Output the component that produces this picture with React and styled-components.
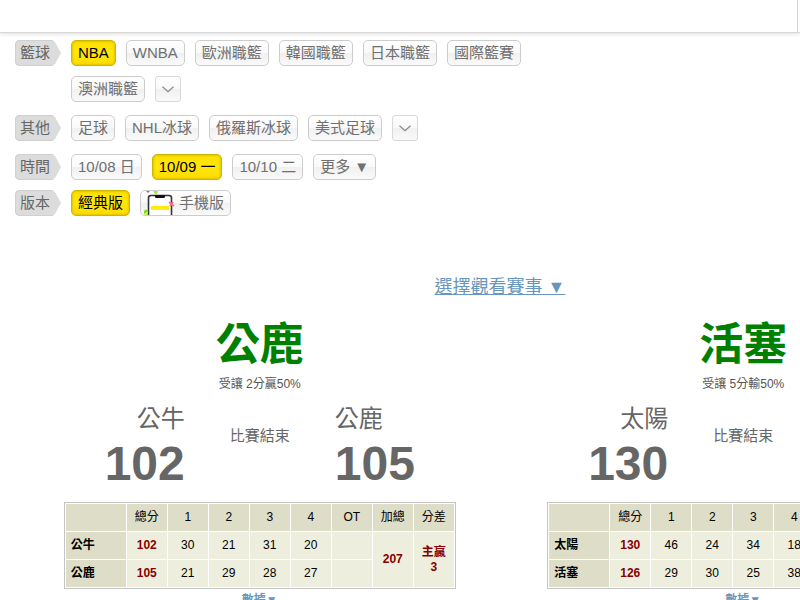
import React from "react";
import styled, { createGlobalStyle, css } from "styled-components";

const GlobalStyle = createGlobalStyle`
  *, *::before, *::after { box-sizing: border-box; }
  body {
    margin: 0;
    background: #fff;
    color: #000;
    font-family: "Liberation Sans", "Noto Sans CJK TC", sans-serif;
  }
`;

const Page = styled.div`
  min-height: 100vh;
  max-height: 100vh;
  overflow: hidden;
`;

const Header = styled.header`
  display: flex;
  justify-content: flex-end;
  height: 33px;
  border-bottom: 1px solid #d8d8d8;
  box-shadow: 0 1px 4px #ddd;
`;

const HeaderEnd = styled.div`
  width: 3px;
  border-left: 1px solid #d4d4d4;
`;

const Filters = styled.nav`
  display: flex;
  flex-direction: column;
  padding: 7px 15px 0;
`;

const FilterRow = styled.div`
  display: flex;
  align-items: flex-start;
  gap: 10px;
  margin-bottom: ${(p) => (p.$tight ? 10 : 13)}px;
`;

const FilterLabel = styled.span`
  flex: none;
  width: 46px;
  height: 26px;
  padding-left: 5px;
  border-radius: 5px 0 0 5px;
  clip-path: polygon(0 0, 37px 0, 40px 2px, 46px 50%, 40px 24px, 37px 100%, 0 100%);
  background: #dcdcdc;
  box-shadow: inset 1px 0 #d0d0d0, inset 0 1px #d0d0d0, inset 0 -1px #d0d0d0;
  color: #666;
  font-size: 15px;
  line-height: 26px;
`;

const Options = styled.div`
  display: flex;
  flex-wrap: wrap;
  gap: 10px;
  max-width: 520px;
`;

const pill = css`
  display: flex;
  align-items: center;
  justify-content: center;
  height: 26px;
  border: 1px solid #ccc;
  border-radius: 5px;
  padding: 0 6px;
  background: linear-gradient(#fff, #f9f9f9 50%, #f0f0f0 51%, #fafafa);
  color: #707070;
  font-family: inherit;
  font-size: 15px;
  line-height: 24px;
  white-space: nowrap;
  text-decoration: none;
  cursor: pointer;
`;

const Option = styled.a`
  ${pill}
  ${(p) =>
    p.$active &&
    css`
      border-color: #cdb600;
      background: linear-gradient(#ffe100, #ffe60a 50%, #ffdc00);
      box-shadow: inset 0 0 2px 1px #dfc600;
      color: #000;
    `}
`;

const PhoneOption = styled(Option)`
  padding: 0 6px 0 3px;
  gap: 3px;
  overflow: hidden;
`;

const MenuButton = styled.button`
  ${pill}
`;

const ExpandButton = styled.button`
  ${pill}
  width: 26px;
  padding: 0;
  border-color: #d8d8d8;
  border-radius: 3px;
`;

const Board = styled.main`
  min-width: 1000px;
  padding: 47px 15px 0 18px;
`;

const Chooser = styled.div`
  display: flex;
  justify-content: center;
  padding-right: 3px;
`;

const ChooserLink = styled.a`
  color: #6797bd;
  font-size: 18px;
  line-height: 28px;
`;

const Games = styled.div`
  display: grid;
  grid-template-columns: 1fr 1fr;
  padding-top: 14px;
`;

const Game = styled.article`
  display: flex;
  flex-direction: column;
  align-items: center;
`;

const Pick = styled.h2`
  margin: 0;
  color: #008000;
  font-size: 44px;
  line-height: 60px;
`;

const Odds = styled.p`
  margin: 0;
  color: #555;
  font-size: 12px;
  line-height: 18px;
`;

const Scoreboard = styled.div`
  display: grid;
  grid-template-columns: 1fr 150px 1fr;
  align-items: center;
  width: 100%;
  padding: 11px 0 8px;
  color: #666;
`;

const Side = styled.div`
  text-align: ${(p) => (p.$home ? "left" : "right")};
`;

const TeamName = styled.div`
  font-size: 24px;
  line-height: 30px;
`;

const Score = styled.div`
  font-size: 48px;
  font-weight: bold;
  line-height: 60px;
`;

const Status = styled.div`
  padding-bottom: 26px;
  font-size: 15px;
  line-height: 22px;
  text-align: center;
`;

const Table = styled.table`
  width: 392px;
  table-layout: fixed;
  border: 1px solid #c4c4c4;
  border-spacing: 1px;
  font-size: 12px;
  line-height: 15px;
  text-align: center;
`;

const TeamCol = styled.col`
  width: 60px;
`;

const Head = styled.th`
  height: 27px;
  padding: 0;
  background: #ddddc8;
  font-weight: normal;
`;

const RowHead = styled(Head)`
  padding-left: 5px;
  font-weight: bold;
  text-align: left;
`;

const Cell = styled.td`
  height: 27px;
  padding: 0 5px;
  background: #eeeede;
  ${(p) =>
    p.$strong &&
    css`
      color: #880000;
      font-weight: bold;
    `}
`;

const DataLink = styled.a`
  margin-top: 2px;
  color: #6797bd;
  font-size: 12px;
  font-weight: bold;
  line-height: 18px;
  text-decoration: none;
`;

function Chevron() {
  return (
    <svg width="12" height="7" viewBox="0 0 12 7" fill="none" aria-hidden="true">
      <path d="M.5 .7 6 5.8 11.5 .7" stroke="#888" strokeWidth="1.2" />
    </svg>
  );
}

function PhoneIcon() {
  return (
    <svg width="32" height="24" viewBox="0 0 32 24" aria-hidden="true">
      <path d="M4.5 25V7Q4.5 4.5 7 4.5H25Q27.5 4.5 27.5 7V25" fill="#fff" stroke="#333" strokeWidth="1.6" />
      <path d="M10.5 4H21.5L20.5 7H11.5Z" fill="#111" />
      <path d="M7 15H25V19H7Z" fill="#ffeb0a" />
      <path d="M0 18 3 20V24H0Z" fill="#c8f35a" />
      <path d="M0 22 3 19" stroke="#70d930" strokeWidth="2" />
      <path d="M9 0H14L13 3H11Z" fill="#a4e653" />
      <path d="M2 0H6L4 2Z" fill="#e7506b" />
      <path d="M25 11 30 15M29 11 26 15" stroke="#ef718c" strokeWidth="2" />
    </svg>
  );
}

const basketball = ["NBA", "WNBA", "歐洲職籃", "韓國職籃", "日本職籃", "國際籃賽", "澳洲職籃"];
const others = ["足球", "NHL冰球", "俄羅斯冰球", "美式足球"];
const dates = ["10/08 日", "10/09 一", "10/10 二"];
const columns = ["", "總分", "1", "2", "3", "4", "OT", "加總", "分差"];

const games = [
  {
    pick: "公鹿",
    odds: "受讓 2分贏50%",
    sum: 207,
    margin: ["主贏", 3],
    away: { name: "公牛", total: 102, periods: [30, 21, 31, 20, ""] },
    home: { name: "公鹿", total: 105, periods: [21, 29, 28, 27, ""] },
  },
  {
    pick: "活塞",
    odds: "受讓 5分輸50%",
    sum: 256,
    margin: ["客贏", 4],
    away: { name: "太陽", total: 130, periods: [46, 24, 34, 18, 8] },
    home: { name: "活塞", total: 126, periods: [29, 30, 25, 38, 4] },
  },
];

function OptionList({ items, active }) {
  return items.map((item) => (
    <Option key={item} href="#" $active={item === active}>
      {item}
    </Option>
  ));
}

function TeamRow({ team, children }) {
  return (
    <tr>
      <RowHead scope="row">{team.name}</RowHead>
      <Cell $strong>{team.total}</Cell>
      {team.periods.map((points, i) => (
        <Cell key={i}>{points}</Cell>
      ))}
      {children}
    </tr>
  );
}

function GameCard({ game }) {
  return (
    <Game>
      <Pick>{game.pick}</Pick>
      <Odds>{game.odds}</Odds>
      <Scoreboard>
        <Side>
          <TeamName>{game.away.name}</TeamName>
          <Score>{game.away.total}</Score>
        </Side>
        <Status>比賽結束</Status>
        <Side $home>
          <TeamName>{game.home.name}</TeamName>
          <Score>{game.home.total}</Score>
        </Side>
      </Scoreboard>
      <Table>
        <colgroup>
          <TeamCol />
          <col span="8" />
        </colgroup>
        <thead>
          <tr>
            {columns.map((c) => (
              <Head key={c} scope="col">{c}</Head>
            ))}
          </tr>
        </thead>
        <tbody>
          <TeamRow team={game.away}>
            <Cell rowSpan={2} $strong>{game.sum}</Cell>
            <Cell rowSpan={2} $strong>
              {game.margin[0]}
              <br />
              {game.margin[1]}
            </Cell>
          </TeamRow>
          <TeamRow team={game.home} />
        </tbody>
      </Table>
      <DataLink href="#">數據▼</DataLink>
    </Game>
  );
}

export default function App() {
  return (
    <Page>
      <GlobalStyle />
      <Header>
        <HeaderEnd />
      </Header>
      <Filters>
        <FilterRow>
          <FilterLabel>籃球</FilterLabel>
          <Options>
            <OptionList items={basketball} active="NBA" />
            <ExpandButton aria-label="更多籃球聯盟"><Chevron /></ExpandButton>
          </Options>
        </FilterRow>
        <FilterRow>
          <FilterLabel>其他</FilterLabel>
          <Options>
            <OptionList items={others} />
            <ExpandButton aria-label="更多其他賽事"><Chevron /></ExpandButton>
          </Options>
        </FilterRow>
        <FilterRow $tight>
          <FilterLabel>時間</FilterLabel>
          <Options>
            <OptionList items={dates} active="10/09 一" />
            <MenuButton>更多 ▼</MenuButton>
          </Options>
        </FilterRow>
        <FilterRow $tight>
          <FilterLabel>版本</FilterLabel>
          <Options>
            <Option href="#" $active>經典版</Option>
            <PhoneOption href="#"><PhoneIcon />手機版</PhoneOption>
          </Options>
        </FilterRow>
      </Filters>
      <Board>
        <Chooser>
          <ChooserLink href="#">選擇觀看賽事 ▼</ChooserLink>
        </Chooser>
        <Games>
          {games.map((game) => (
            <GameCard key={game.pick} game={game} />
          ))}
        </Games>
      </Board>
    </Page>
  );
}
